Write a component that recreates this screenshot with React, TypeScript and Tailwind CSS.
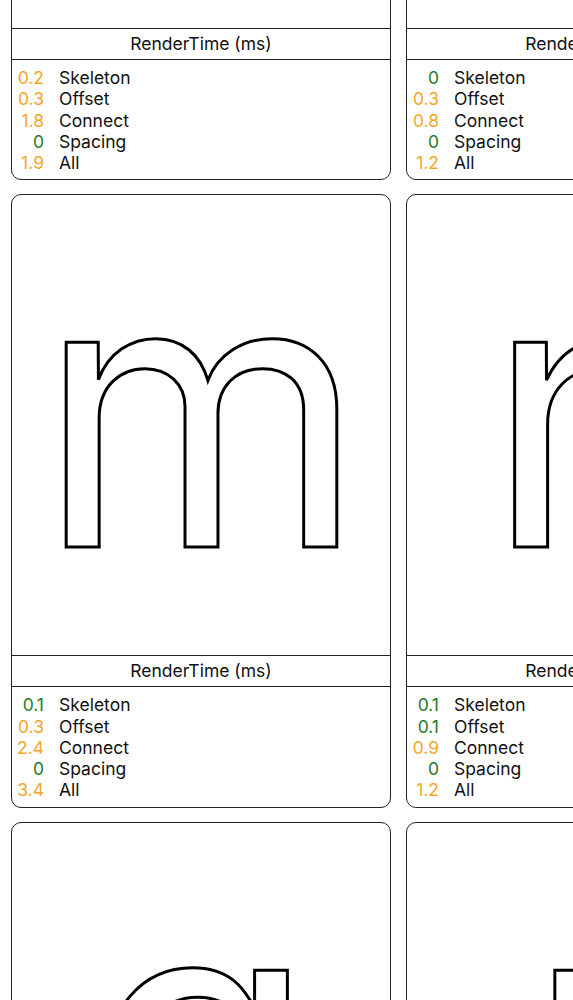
import React from "react";

type Card = { glyph: string; stats: number[] };

const LABELS = ["Skeleton", "Offset", "Connect", "Spacing", "All"];

const CARDS: Card[] = [
  { glyph: "k", stats: [0.2, 0.3, 1.8, 0, 1.9] },
  { glyph: "l", stats: [0, 0.3, 0.8, 0, 1.2] },
  { glyph: "m", stats: [0.1, 0.3, 2.4, 0, 3.4] },
  { glyph: "n", stats: [0.1, 0.1, 0.9, 0, 1.2] },
  { glyph: "a", stats: [0.1, 0.3, 1.6, 0, 2.1] },
  { glyph: "r", stats: [0, 0.2, 0.7, 0, 1.0] },
];

function GlyphCard({ card }: { card: Card }) {
  return (
    <div className="w-[380px] rounded-[10px] border border-[#222] bg-white overflow-hidden">
      <div className="h-[461px] border-b border-[#222] overflow-hidden pt-[28px] pl-[1px] text-center">
        <span className="font-['Inter',sans-serif] text-[375px] leading-none text-transparent [-webkit-text-stroke:3px_#000] [font-feature-settings:'cv11']">
          {card.glyph}
        </span>
      </div>
      <div className="h-[31px] border-b border-[#222] flex items-center justify-center text-[17.5px] text-[#111]">
        RenderTime (ms)
      </div>
      <div className="grid grid-cols-[32px_1fr] gap-x-[15px] pt-[7px] pb-[6px] text-[17.5px] leading-[21.25px]">
        {card.stats.map((v, i) => (
          <React.Fragment key={i}>
            <div className={v <= 0.1 ? "text-right text-[#1f7a1f]" : "text-right text-[#f4a62a]"}>
              {String(v)}
            </div>
            <div className="text-[#111]">{LABELS[i]}</div>
          </React.Fragment>
        ))}
      </div>
    </div>
  );
}

export default function App() {
  return (
    <div className="h-[1000px] w-full overflow-hidden bg-white font-['Inter',sans-serif]">
      <div className="-mt-[433px] ml-[11px] grid w-max grid-cols-[380px_380px] gap-x-[15px] gap-y-[14px]">
        {CARDS.map((c, i) => (
          <GlyphCard key={i} card={c} />
        ))}
      </div>
    </div>
  );
}
